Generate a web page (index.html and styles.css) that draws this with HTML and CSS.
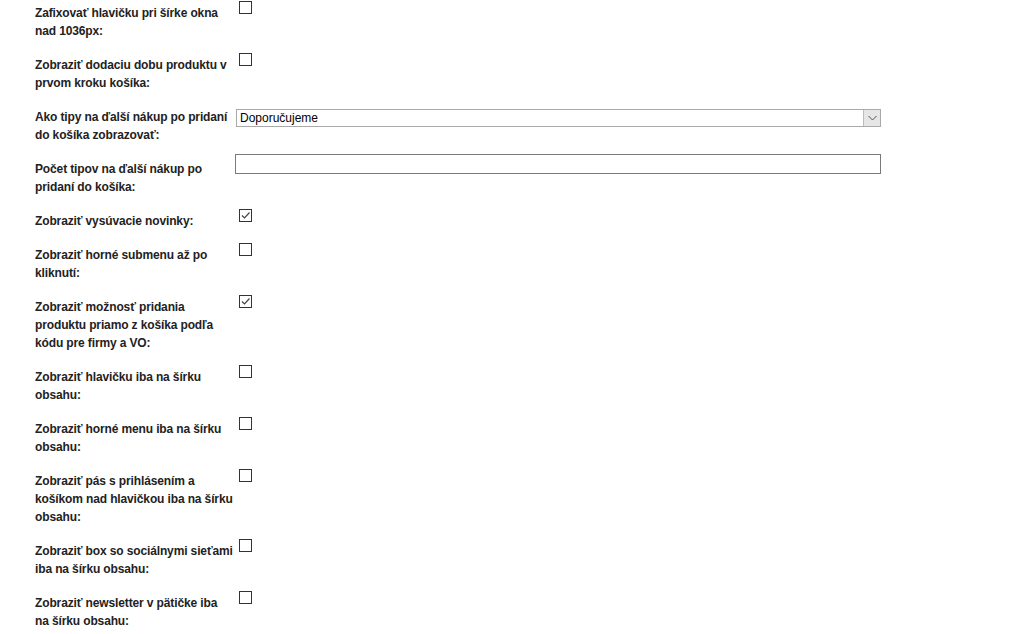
FILE: index.html
```html
<!DOCTYPE html>
<html lang="sk">
<head>
<meta charset="utf-8">
<title>Nastavenia</title>
<link rel="stylesheet" href="styles.css">
</head>
<body>
<div class="form">
  <div class="row">
    <div class="label">Zafixovať hlavičku pri šírke okna nad 1036px:</div>
    <div class="ctrl"><span class="check"></span></div>
  </div>
  <div class="row">
    <div class="label">Zobraziť dodaciu dobu produktu v prvom kroku košíka:</div>
    <div class="ctrl"><span class="check"></span></div>
  </div>
  <div class="row">
    <div class="label">Ako tipy na ďalší nákup po pridaní do košíka zobrazovať:</div>
    <div class="ctrl">
      <div class="select"><span class="value">Doporučujeme</span><span class="arrow"><svg width="9" height="6" viewBox="0 0 9 6"><path d="M0.5 1 L4.5 5 L8.5 1" fill="none" stroke="#555" stroke-width="1"/></svg></span></div>
    </div>
  </div>
  <div class="row">
    <div class="label">Počet tipov na ďalší nákup po pridaní do košíka:</div>
    <div class="ctrl"><div class="text-input"></div></div>
  </div>
  <div class="row">
    <div class="label">Zobraziť vysúvacie novinky:</div>
    <div class="ctrl"><span class="check"><svg width="11" height="11" viewBox="0 0 11 11"><path d="M2 5.5 L4.5 8 L9.5 2.5" fill="none" stroke="#444" stroke-width="1.2"/></svg></span></div>
  </div>
  <div class="row">
    <div class="label">Zobraziť horné submenu až po kliknutí:</div>
    <div class="ctrl"><span class="check"></span></div>
  </div>
  <div class="row">
    <div class="label">Zobraziť možnosť pridania produktu priamo z košíka podľa kódu pre firmy a VO:</div>
    <div class="ctrl"><span class="check"><svg width="11" height="11" viewBox="0 0 11 11"><path d="M2 5.5 L4.5 8 L9.5 2.5" fill="none" stroke="#444" stroke-width="1.2"/></svg></span></div>
  </div>
  <div class="row">
    <div class="label">Zobraziť hlavičku iba na šírku obsahu:</div>
    <div class="ctrl"><span class="check"></span></div>
  </div>
  <div class="row">
    <div class="label">Zobraziť horné menu iba na šírku obsahu:</div>
    <div class="ctrl"><span class="check"></span></div>
  </div>
  <div class="row">
    <div class="label">Zobraziť pás s prihlásením a košíkom nad hlavičkou iba na šírku obsahu:</div>
    <div class="ctrl"><span class="check"></span></div>
  </div>
  <div class="row">
    <div class="label">Zobraziť box so sociálnymi sieťami iba na šírku obsahu:</div>
    <div class="ctrl"><span class="check"></span></div>
  </div>
  <div class="row">
    <div class="label">Zobraziť newsletter v pätičke iba<br>na šírku obsahu:</div>
    <div class="ctrl"><span class="check"></span></div>
  </div>
</div>
</body>
</html>
```

FILE: styles.css
```css
html, body {
  margin: 0;
  padding: 0;
  background: #fff;
}
body {
  font-family: "Liberation Sans", Arial, sans-serif;
  font-size: 12px;
  color: #222;
  overflow: hidden;
}
.form {
  margin-top: -4px;
  padding-left: 35px;
}
.row {
  display: grid;
  grid-template-columns: 200px 646px;
  padding: 8px 0;
}
.label {
  font-weight: bold;
  line-height: 18px;
  letter-spacing: -0.13px;
}
.ctrl {
  display: flex;
  align-items: flex-start;
}
.check {
  box-sizing: border-box;
  width: 13px;
  height: 13px;
  margin: -3px 0 0 4px;
  border: 1px solid #333;
  background: #fff;
  display: flex;
  align-items: center;
  justify-content: center;
}
.check svg {
  display: block;
}
.select {
  box-sizing: border-box;
  width: 646px;
  height: 18px;
  margin-top: 1px;
  margin-left: 1px;
  border: 1px solid #a9a9a9;
  display: flex;
  align-items: stretch;
  background: #fff;
}
.select .value {
  flex: 1;
  padding-left: 3px;
  line-height: 16px;
  font-size: 12px;
  color: #000;
}
.select .arrow {
  width: 16px;
  background: #e6e6e6;
  border-left: 1px solid #bdbdbd;
  display: flex;
  align-items: center;
  justify-content: center;
}
.text-input {
  box-sizing: border-box;
  width: 646px;
  height: 20px;
  margin-top: -6px;
  border: 1px solid #7a7a7a;
  background: #fff;
}
```
